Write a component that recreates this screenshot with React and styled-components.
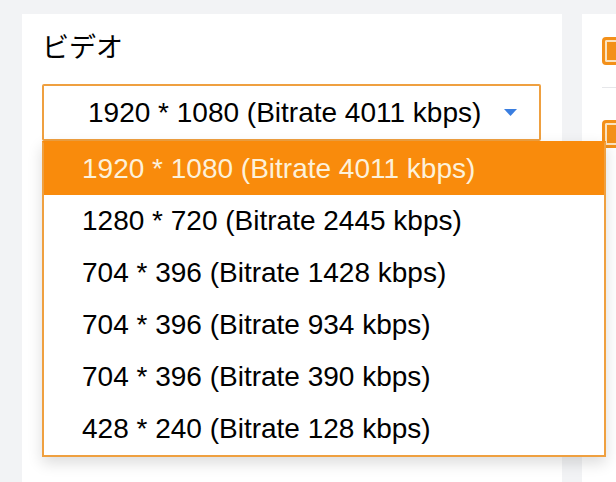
import React, { useState } from "react";
import styled, { createGlobalStyle } from "styled-components";

const Global = createGlobalStyle`
  html, body { margin: 0; padding: 0; background: #f2f3f5; overflow: hidden; }
  body { font-family: "Liberation Sans", Arial, "Noto Sans CJK JP", sans-serif; }
`;

const Page = styled.div`
  display: grid;
  grid-template-columns: 540px 1fr;
  column-gap: 20px;
  padding: 14px 0 0 22px;
  height: 482px;
  width: 100vw;
  box-sizing: border-box;
  overflow: hidden;
`;

const Card = styled.div`
  background: #ffffff;
  padding: ${(p) => p.$pad};
  box-sizing: border-box;
  position: relative;
  min-width: 0;
`;

const Title = styled.div`
  font-family: "Noto Sans CJK JP", "Liberation Sans", sans-serif;
  font-size: 27px;
  line-height: 32px;
  color: #000;
  margin-bottom: 22px;
`;

const SelectWrap = styled.div`
  position: relative;
  width: 499px;
`;

const SelectBox = styled.div`
  height: 57px;
  box-sizing: border-box;
  border: 2px solid #efa040;
  border-radius: 2px;
  display: flex;
  align-items: center;
  padding-left: 44px;
  padding-right: 22px;
  font-size: 28px;
  color: #000;
  background: #fff;
`;

const SelectText = styled.span`
  flex: 1;
  white-space: nowrap;
`;

const Caret = styled.svg`
  width: 13px;
  height: 7px;
  flex: none;
`;

const Menu = styled.ul`
  position: absolute;
  top: 57px;
  left: 0;
  width: 560px;
  margin: 0;
  padding: 0;
  list-style: none;
  border: 2px solid #efa040;
  border-top-color: #f98b0c;
  background: #fff;
  box-shadow: 0 6px 14px rgba(0, 0, 0, 0.14);
  z-index: 2;
`;

const Item = styled.li`
  height: 52px;
  display: flex;
  align-items: center;
  padding-left: 38px;
  font-size: 28px;
  white-space: nowrap;
  color: ${(p) => (p.$active ? "#fdf1da" : "#000")};
  background: ${(p) => (p.$active ? "#f98b0c" : "#fff")};
`;

const Side = styled.div`
  display: flex;
  flex-direction: column;
`;

const SideRow = styled.div`
  display: flex;
  align-items: center;
  height: 28px;
  padding: ${(p) => p.$pad};
  border-bottom: ${(p) => (p.$line ? "1px solid #e6e7ea" : "none")};
`;

const Check = styled.div`
  width: 28px;
  height: 28px;
  flex: none;
  box-sizing: border-box;
  border-radius: 4px;
  background: #f39019;
  border: 3px solid #f39019;
  box-shadow: inset 0 0 0 2px #fbe3bf;
`;

const options = [
  "1920 * 1080 (Bitrate 4011 kbps)",
  "1280 * 720 (Bitrate 2445 kbps)",
  "704 * 396 (Bitrate 1428 kbps)",
  "704 * 396 (Bitrate 934 kbps)",
  "704 * 396 (Bitrate 390 kbps)",
  "428 * 240 (Bitrate 128 kbps)",
];

export default function App() {
  const [sel, setSel] = useState(0);
  return (
    <>
      <Global />
      <Page>
        <Card $pad="16px 20px">
          <Title>ビデオ</Title>
          <SelectWrap>
            <SelectBox>
              <SelectText>{options[sel]}</SelectText>
              <Caret viewBox="0 0 13 7">
                <path d="M0 0 H13 L6.5 7 Z" fill="#3a7ee0" />
              </Caret>
            </SelectBox>
            <Menu>
              {options.map((o, i) => (
                <Item key={i} $active={i === sel} onClick={() => setSel(i)}>
                  {o}
                </Item>
              ))}
            </Menu>
          </SelectWrap>
        </Card>
        <Card $pad="0 0 0 20px">
          <Side>
            <SideRow $pad="23px 0 22px" $line>
              <Check />
            </SideRow>
            <SideRow $pad="32px 0 0">
              <Check />
            </SideRow>
          </Side>
        </Card>
      </Page>
    </>
  );
}
